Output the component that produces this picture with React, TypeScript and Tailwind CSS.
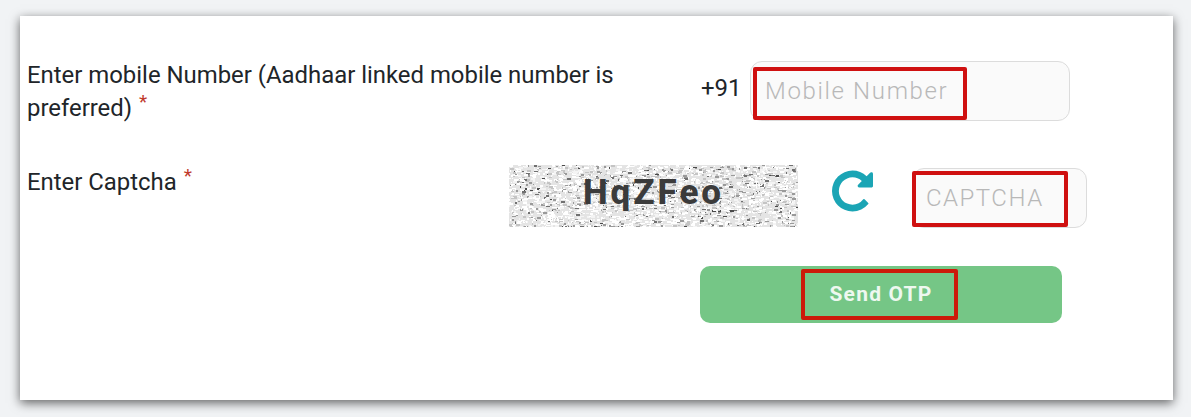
// captcha speckle, seeded so every render gives the same picture
function buildNoise() {
  const dots: { x: number; y: number; w: number; h: number; fill: string }[] = [];
  let seed = 1337;
  const rand = () => {
    seed = (seed * 16807) % 2147483647;
    return seed / 2147483647;
  };
  const greys = ['#ffffff', '#f4f4f4', '#c4c4c4', '#9a9a9a', '#707070', '#4a4a4a'];
  for (let i = 0; i < 3200; i++) {
    dots.push({
      x: Math.floor(rand() * 289),
      y: Math.floor(rand() * 62),
      w: 1 + Math.floor(rand() * 4),
      h: 1 + Math.floor(rand() * 2),
      fill: greys[Math.floor(rand() * rand() * greys.length)],
    });
  }
  return dots;
}

const NOISE = buildNoise();

const Required = () => (
  <span className="ml-[1px] align-[8px] text-[19px] leading-none text-[#c0392b]">*</span>
);

export default function App() {
  return (
    <div className="h-[417px] w-[1191px] overflow-hidden bg-[#f1f3f5] pt-[16px] pl-[20px] font-['Roboto',sans-serif]">
      <div className="h-[384px] w-[1153px] bg-white pt-[45px] pl-[7px] shadow-[0_3px_10px_rgba(0,0,0,0.6)]">
        {/* mobile number */}
        <div className="flex items-start">
          <label className="-mt-[2px] w-[610px] text-[23.9px] leading-[33px] text-[#212529]">
            Enter mobile Number (Aadhaar linked mobile number is preferred) <Required />
          </label>
          <span className="ml-[64px] w-[49px] pt-[12px] text-[24px] leading-[30px] text-[#212529]">+91</span>
          <div className="relative h-[60px] w-[320px]">
            <input
              placeholder="Mobile Number"
              className="h-full w-full rounded-[12px] border border-[#dcdcdc] bg-[#fafafa] pl-[14px] text-[24px] font-light tracking-[1.65px] outline-none placeholder:text-[#b8b8b8]"
            />
            <div className="absolute top-[6px] left-[3px] h-[53px] w-[214px] rounded-[2px] border-4 border-[#cf1010]" />
          </div>
        </div>

        {/* captcha */}
        <div className="mt-[40px] flex items-start">
          <label className="w-[482px] pt-[1px] text-[23.9px] leading-[33px] text-[#212529]">
            Enter Captcha <Required />
          </label>
          <div className="relative flex h-[62px] w-[289px] items-center justify-center">
            <svg width="289" height="62" className="absolute inset-0 block bg-[#e4e4e4]">
              {NOISE.map((d, i) => (
                <rect key={i} x={d.x} y={d.y} width={d.w} height={d.h} fill={d.fill} />
              ))}
            </svg>
            <span className="relative pb-[6px] text-[35px] leading-[46px] font-extrabold tracking-[3px] text-[#3b3b3b]">
              HqZFeo
            </span>
          </div>
          <svg viewBox="0 128 1536 1536" className="mt-[5px] ml-[34px] h-[42px] w-[41px] shrink-0 fill-[#1ba5b5]">
            <path d="M1536 256v448q0 26-19 45t-45 19h-448q-42 0-59-40-17-39 14-69l138-138q-148-137-349-137-104 0-198.5 40.5t-163.5 109.5-109.5 163.5-40.5 198.5 40.5 198.5 109.5 163.5 163.5 109.5 198.5 40.5q119 0 225-52t179-147q7-10 23-12 14 0 25 9l137 138q9 8 9.5 20.5t-7.5 22.5q-109 132-264 204.5t-327 72.5q-156 0-298-61t-245-164-164-245-61-298 61-298 164-245 245-164 298-61q147 0 284.5 55.5t244.5 156.5l130-129q29-31 70-14 39 17 39 59z" />
          </svg>
          <div className="relative mt-[3px] ml-[39px] h-[60px] w-[175px]">
            <input
              placeholder="CAPTCHA"
              className="h-full w-full rounded-[12px] border border-[#dcdcdc] bg-[#fafafa] pl-[13px] text-[24px] font-light tracking-[1.5px] outline-none placeholder:text-[#b8b8b8]"
            />
            <div className="absolute top-[3px] left-0 h-[56px] w-[156px] rounded-[2px] border-4 border-[#cf1010]" />
          </div>
        </div>

        {/* submit */}
        <div className="relative mt-[38px] ml-[673px] h-[57px] w-[362px]">
          <button className="h-full w-full rounded-[10px] bg-[#75c686] text-[21px] font-bold tracking-[1.2px] text-[#eef8f0]">
            Send OTP
          </button>
          <div className="absolute top-[3px] left-[101px] h-[51px] w-[157px] rounded-[2px] border-4 border-[#cc1a0a]" />
        </div>
      </div>
    </div>
  );
}
